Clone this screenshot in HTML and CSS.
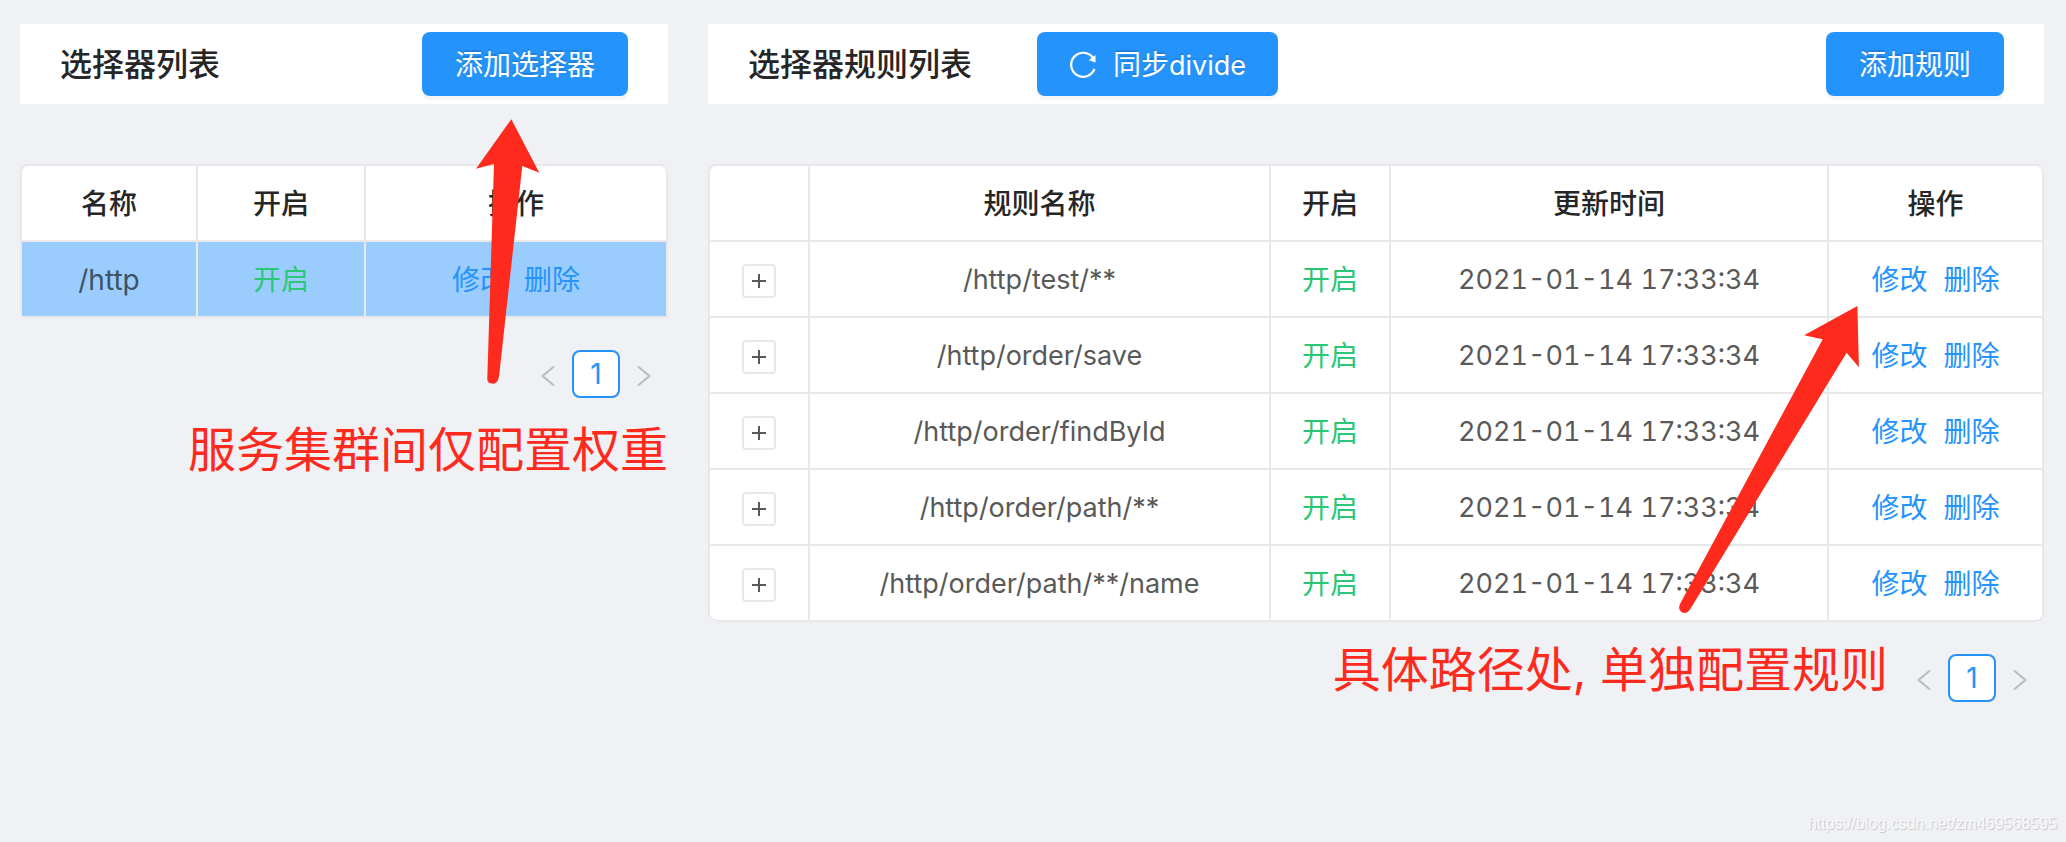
FILE: index.html
```html
<!DOCTYPE html>
<html lang="zh-CN">
<head>
<meta charset="utf-8">
<title>divide</title>
<link rel="stylesheet" href="styles.css">
</head>
<body>
<main class="page">
  <section class="panel">
    <header class="panel-header">
      <h1 class="title">选择器列表</h1>
      <button class="btn" type="button">添加选择器</button>
    </header>
    <table class="table">
      <colgroup><col class="col-selector"><col class="col-state"><col class="col-selector-actions"></colgroup>
      <thead>
        <tr><th>名称</th><th>开启</th><th>操作</th></tr>
      </thead>
      <tbody>
        <tr class="selected"><td>/http</td><td class="on">开启</td><td><div class="actions"><a href="#">修改</a><a href="#">删除</a></div></td></tr>
      </tbody>
    </table>
    <nav class="pager" aria-label="选择器分页">
      <button class="pager-item" type="button" aria-label="上一页"><svg width="14" height="22" viewBox="0 0 14 22"><path d="M13 1.500 1.500 11 13 20.500"/></svg></button>
      <button class="pager-item current" type="button">1</button>
      <button class="pager-item" type="button" aria-label="下一页"><svg width="14" height="22" viewBox="0 0 14 22"><path d="M1 1.500 12.500 11 1 20.500"/></svg></button>
    </nav>
    <svg class="arrow arrow-selector" width="64" height="266" viewBox="0 0 64 266" aria-hidden="true"><path d="M35.300 1.300 63.300 54.700 46.300 48 23 258.500Q21.500 265.700 17 265.700 11.300 265.500 11.300 261L18 46 0 50.700Z"/></svg>
    <p class="note note-selector">服务集群间仅配置权重</p>
  </section>

  <section class="panel">
    <header class="panel-header">
      <h1 class="title">选择器规则列表</h1>
      <button class="btn btn-sync" type="button"><svg width="28" height="28" viewBox="0 0 28 28" aria-hidden="true"><path class="sync-ring" d="M24.400 7.500A12 12 0 1 0 25.400 18"/><path class="sync-head" d="M26.500 4V11.500L19.800 9.200Z"/></svg><span>同步<span class="latin">divide</span></span></button>
      <button class="btn" type="button">添加规则</button>
    </header>
    <table class="table">
      <colgroup><col class="col-expand"><col class="col-rule"><col class="col-enabled"><col class="col-time"><col class="col-actions"></colgroup>
      <thead>
        <tr><th></th><th>规则名称</th><th>开启</th><th>更新时间</th><th>操作</th></tr>
      </thead>
      <tbody>
        <tr><td><button class="expand" type="button" aria-label="展开"></button></td><td class="latin">/http/test/**</td><td class="on">开启</td><td class="latin time">2021-01-14 17:33:34</td><td><div class="actions"><a href="#">修改</a><a href="#">删除</a></div></td></tr>
        <tr><td><button class="expand" type="button" aria-label="展开"></button></td><td class="latin">/http/order/save</td><td class="on">开启</td><td class="latin time">2021-01-14 17:33:34</td><td><div class="actions"><a href="#">修改</a><a href="#">删除</a></div></td></tr>
        <tr><td><button class="expand" type="button" aria-label="展开"></button></td><td class="latin">/http/order/findById</td><td class="on">开启</td><td class="latin time">2021-01-14 17:33:34</td><td><div class="actions"><a href="#">修改</a><a href="#">删除</a></div></td></tr>
        <tr><td><button class="expand" type="button" aria-label="展开"></button></td><td class="latin">/http/order/path/**</td><td class="on">开启</td><td class="latin time">2021-01-14 17:33:34</td><td><div class="actions"><a href="#">修改</a><a href="#">删除</a></div></td></tr>
        <tr><td><button class="expand" type="button" aria-label="展开"></button></td><td class="latin">/http/order/path/**/name</td><td class="on">开启</td><td class="latin time">2021-01-14 17:33:34</td><td><div class="actions"><a href="#">修改</a><a href="#">删除</a></div></td></tr>
      </tbody>
    </table>
    <nav class="pager" aria-label="规则分页">
      <button class="pager-item" type="button" aria-label="上一页"><svg width="14" height="22" viewBox="0 0 14 22"><path d="M13 1.500 1.500 11 13 20.500"/></svg></button>
      <button class="pager-item current" type="button">1</button>
      <button class="pager-item" type="button" aria-label="下一页"><svg width="14" height="22" viewBox="0 0 14 22"><path d="M1 1.500 12.500 11 1 20.500"/></svg></button>
    </nav>
    <svg class="arrow arrow-rule" width="182" height="310" viewBox="0 0 182 310" aria-hidden="true"><path d="M179.400 2 180.900 63.300 168.600 48.700 12 305.500Q9 310 4 308.500-.5 306 2 300L144.700 35.300 126.100 31.300Z"/></svg>
    <p class="note note-rule">具体路径处, 单独配置规则</p>
  </section>
</main>
<p class="watermark">https://blog.csdn.net/zm469568595</p>
</body>
</html>
```
FILE: styles.css
```css
* {
  box-sizing: border-box;
}

body {
  margin: 0;
  min-height: 100vh;
  position: relative;
  background: #f0f1f5;
  color: #595959;
  font-family: Inter, "Noto Sans CJK SC", sans-serif;
  font-size: 28px;
  line-height: 42px;
}

button {
  font: inherit;
  cursor: pointer;
}

a {
  color: #2593fc;
  text-decoration: none;
}

.page {
  display: grid;
  grid-template-columns: minmax(0, 648fr) minmax(0, 1336fr);
  gap: 40px;
  padding: 24px 22px 24px 20px;
}

.panel {
  position: relative;
}

.panel-header {
  display: flex;
  align-items: center;
  min-height: 80px;
  padding: 0 40px;
  margin-bottom: 60px;
  background: #fff;
}

.title {
  margin: 0;
  padding-top: 2px;
  color: #262626;
  font-size: 32px;
  font-weight: 500;
  line-height: 48px;
  white-space: nowrap;
}

.btn {
  display: flex;
  align-items: center;
  height: 64px;
  margin-left: auto;
  padding: 2px 33px 0;
  border: 0;
  border-radius: 8px;
  background: #2593fc;
  box-shadow: 0 4px 0 rgba(0, 0, 0, 0.04);
  color: #fff;
  text-shadow: 0 -2px 0 rgba(0, 0, 0, 0.12);
  white-space: nowrap;
}

.btn-sync {
  gap: 16px;
  margin-left: 65px;
  padding: 2px 32px 0;
}

.latin {
  font-size: 27px;
}

.time {
  font-variant-numeric: tabular-nums;
}

.sync-ring {
  fill: none;
  stroke: #fff;
  stroke-width: 2.2;
}

.sync-head {
  fill: #fff;
}

.table {
  width: 100%;
  table-layout: fixed;
  border: solid #e8e8e8;
  border-width: 2px 0 0 2px;
  border-radius: 8px;
  border-collapse: separate;
  border-spacing: 0;
  background: #fff;
  text-align: center;
}

.table th,
.table td {
  height: 76px;
  padding: 2px 0 0;
  border: solid #e8e8e8;
  border-width: 0 2px 2px 0;
}

.table th {
  color: #262626;
  font-weight: 500;
}

.table th:last-child {
  border-top-right-radius: 8px;
}

.table tr:last-child td:first-child {
  border-bottom-left-radius: 8px;
}

.table tr:last-child td:last-child {
  border-bottom-right-radius: 8px;
}

.table .selected td {
  background: #9acdfe;
  color: #3d5266;
}

.table tr.selected:last-child td {
  border-radius: 0;
}

.table .on,
.table .selected .on {
  color: #2ac776;
}

.col-selector { width: 176px; }
.col-state { width: 168px; }
.col-selector-actions { width: 302px; }
.col-expand { width: 100px; }
.col-rule { width: 461px; }
.col-enabled { width: 120px; }
.col-time { width: 438px; }
.col-actions { width: 215px; }

.actions {
  display: flex;
  justify-content: center;
  gap: 16px;
}

.expand {
  display: grid;
  width: 34px;
  height: 34px;
  margin: 2px auto 0;
  padding: 0;
  border: 2px solid #e8e8e8;
  border-radius: 4px;
  background:
    linear-gradient(#595959, #595959) center / 14px 2px no-repeat,
    linear-gradient(#595959, #595959) center / 2px 14px no-repeat,
    #fff;
}

.pager {
  display: flex;
  justify-content: flex-end;
  margin-top: 32px;
}

.pager-item {
  display: grid;
  place-items: center;
  width: 48px;
  height: 48px;
  padding: 4px 0 0;
  border: 0;
  border-radius: 8px;
  background: none;
}

.pager-item path {
  fill: none;
  stroke: #b8b9bc;
  stroke-width: 2;
}

.pager-item.current {
  padding: 0;
  border: 2px solid #2593fc;
  background: #fff;
  color: #2593fc;
}

.arrow {
  position: absolute;
  fill: #fe2a1d;
}

.arrow-selector {
  right: 128px;
  top: 94px;
}

.arrow-rule {
  right: 184px;
  top: 280px;
}

.note {
  position: absolute;
  margin: 0;
  color: #fe2a1d;
  font-size: 48px;
  line-height: 72px;
  white-space: nowrap;
}

.note-selector {
  right: 0;
  top: 390px;
}

.note-rule {
  right: 156px;
  top: 610px;
}

.watermark {
  position: absolute;
  right: 9px;
  bottom: 8px;
  margin: 0;
  color: #f8f9fb;
  font-family: "Liberation Sans", sans-serif;
  font-size: 16px;
  line-height: 20px;
  text-shadow: 1px 1px 1px #c4c5c9;
}
```
